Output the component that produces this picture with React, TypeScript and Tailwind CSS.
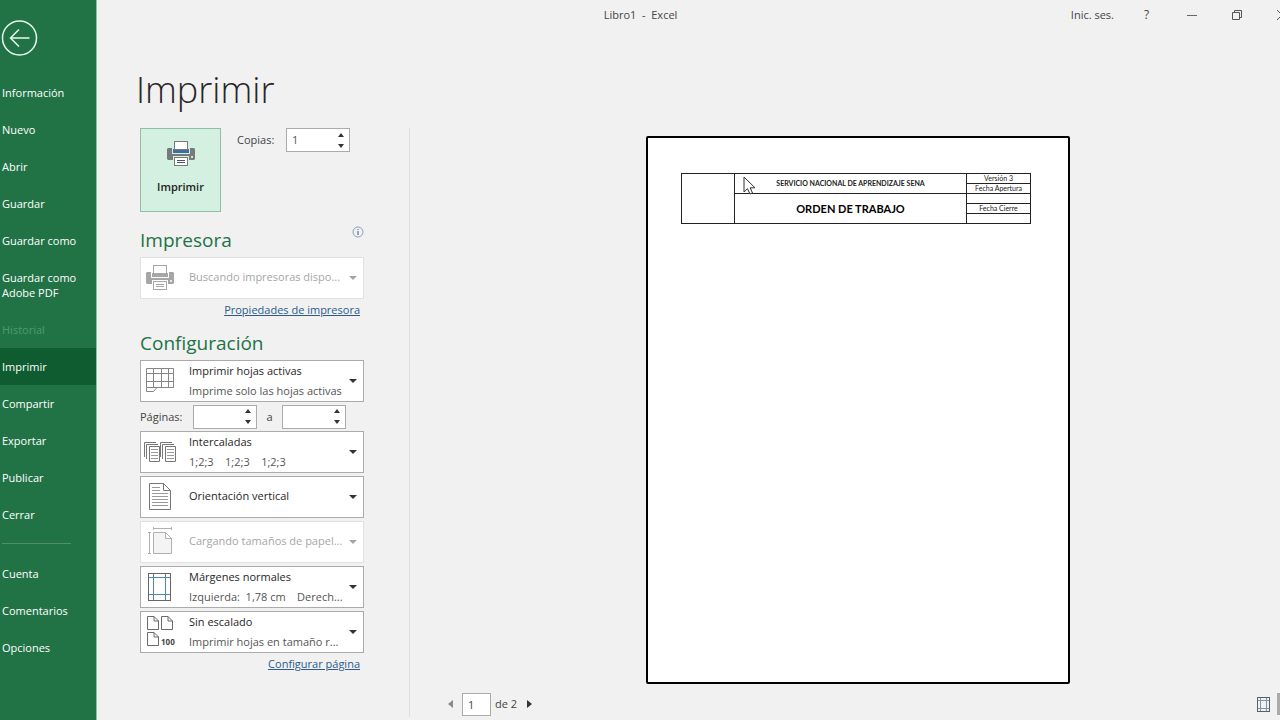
import { useState, type ReactNode } from 'react';

const navItems = [
  'Información',
  'Nuevo',
  'Abrir',
  'Guardar',
  'Guardar como',
  'Guardar como Adobe PDF',
  'Historial',
  'Imprimir',
  'Compartir',
  'Exportar',
  'Publicar',
  'Cerrar',
];

const footerItems = ['Cuenta', 'Comentarios', 'Opciones'];

function NavButton({ label, active, disabled }: { label: string; active?: boolean; disabled?: boolean }) {
  return (
    <button
      disabled={disabled}
      className={`block w-full py-[11px] pl-0.5 pr-4 text-left text-[11px] font-medium leading-[15px] ${
        active ? 'bg-[#0e5c2f]' : ''
      } ${disabled ? 'text-[#4f9870]' : 'text-white'}`}
    >
      {label}
    </button>
  );
}

function PrinterIcon({ disabled }: { disabled?: boolean }) {
  const body = disabled ? '#a6a6a6' : '#777a7c';
  const line = disabled ? '#a6a6a6' : '#44546a';
  const paper = disabled ? '#fff' : '#d3f0e0';
  return (
    <svg width="28" height="26" viewBox="0 0 28 26" fill="none">
      <path d="M1 7H27L28 8V18L27 19H1L0 18V8Z" fill={body} />
      <path d="M5 6H23V13H5Z" fill={paper} />
      <path d="M6 8H22V12H6Z" fill={disabled ? '#a6a6a6' : '#3d6da3'} />
      <rect x="7.500" y="0.500" width="13" height="8" fill="#fff" stroke={body} />
      <rect x="6" y="15" width="16" height="11" fill={paper} />
      <rect x="7.500" y="16.500" width="13" height="8" fill="#fff" stroke={body} />
      <path d="M10 19.500H18M10 21.500H18" stroke={line} />
      <circle cx="25" cy="16" r="1" fill="#fff" />
    </svg>
  );
}

function SheetsIcon() {
  return (
    <svg width="40" height="40" viewBox="0 0 40 40" fill="none" stroke="#858585">
      <path d="M5.500 7.500H32.500V26.500H5.500ZM12.500 7V26M20.500 7V26M27.500 7V26M5 12.500H32M5 20.500H32" />
      <path d="M5.500 26.500V30.500H12.500L16 26.500" />
    </svg>
  );
}

function CollatedIcon() {
  return (
    <svg width="40" height="40" viewBox="0 0 40 40" fill="none" stroke="#777">
      <path d="M3.500 25V10.500H15M5.500 27V12.500H17M19.500 25V10.500H31M21.500 27V12.500H33" />
      <path d="M8.500 14.500H18.500V29.500H8.500ZM24.500 14.500H34.500V29.500H24.500Z" fill="#fff" />
      <path
        d="M10 17.500H17M10 20.500H17M10 23.500H17M10 26.500H17M26 17.500H33M26 20.500H33M26 23.500H33M26 26.500H33"
        stroke="#9a9a9a"
      />
    </svg>
  );
}

function PortraitIcon() {
  return (
    <svg width="40" height="40" viewBox="0 0 40 40" fill="none" stroke="#777">
      <path d="M8.500 6.500H22.500L29.500 13.500V32.500H8.500ZM22.500 6.500V13.500H29.500" />
      <path
        d="M11 10.500H19M11 13.500H19M11 16.500H27M11 19.500H27M11 22.500H27M11 25.500H27M11 28.500H27"
        stroke="#9a9a9a"
      />
    </svg>
  );
}

function PaperSizeIcon() {
  return (
    <svg width="40" height="40" viewBox="0 0 40 40" fill="none" stroke="#b0b0b0">
      <path d="M12.500 10.500H24.500L30.500 16.500V31.500H12.500ZM24.500 10.500V16.500H30.500" fill="#f4f4f4" />
      <path d="M12 6.500H31M12.500 5V8M30.500 5V8M8.500 10V32M7 10.500H10M7 31.500H10" />
    </svg>
  );
}

function MarginsIcon({ small }: { small?: boolean }) {
  if (small) {
    return (
      <svg width="13" height="15" viewBox="0 0 13 15" fill="none">
        <path d="M3.500 1V14M9.500 1V14M1 3.500H12M1 11.500H12" stroke="#7d95a8" />
        <rect x="0.500" y="0.500" width="12" height="14" stroke="#56606a" />
      </svg>
    );
  }
  return (
    <svg width="40" height="40" viewBox="0 0 40 40" fill="none">
      <path d="M12.500 7V33M24.500 7V33M8 10.500H30M8 27.500H30" stroke="#4f86b5" />
      <rect x="7.500" y="6.500" width="22" height="27" stroke="#666" />
    </svg>
  );
}

function ScalingIcon() {
  return (
    <svg width="40" height="40" viewBox="0 0 40 40" fill="none" stroke="#6a6a6a">
      <path d="M6.500 4.500H13L17.500 9V17.500H6.500ZM13 4.500V9H17.500" />
      <path d="M20.500 4.500H27L31.500 9V17.500H20.500ZM27 4.500V9H31.500" />
      <path d="M6.500 20.500H13L17.500 25V33.500H6.500ZM13 20.500V25H17.500" />
      <text x="20" y="33" fontSize="8" fontWeight="700" fill="#444" stroke="none">
        100
      </text>
    </svg>
  );
}

type OptionBoxProps = {
  name: string;
  value: string;
  detail?: string;
  icon: ReactNode;
  disabled?: boolean;
};

function OptionBox({ name, value, detail, icon, disabled }: OptionBoxProps) {
  return (
    <div
      className={`relative flex h-[42px] items-center border bg-white ${
        disabled ? 'border-[#e1e1e1]' : 'border-[#ababab]'
      }`}
    >
      <div className="flex w-12 shrink-0 items-center">{icon}</div>
      <div className={`min-w-0 flex-1 ${detail ? '' : 'pb-0.5'}`}>
        <select
          aria-label={name}
          disabled={disabled}
          className={`block h-5 w-full appearance-none bg-transparent text-[11px] leading-5 opacity-100 ${
            disabled ? 'text-[#a6a6a6]' : 'text-[#262626]'
          }`}
        >
          <option>{value}</option>
        </select>
        {detail && <p className="whitespace-pre leading-5 text-[#555]">{detail}</p>}
      </div>
      <svg className="pointer-events-none absolute right-1.5 top-[17px]" width="8" height="6" viewBox="0 0 8 6">
        <path d="M0 1H8L4 5Z" fill={disabled ? '#a6a6a6' : '#333'} />
      </svg>
    </div>
  );
}

function NumberBox({ id, initial }: { id: string; initial: string }) {
  const [value, setValue] = useState(initial);
  const step = (n: number) => setValue(String(Math.max(1, Number(value) + n)));

  return (
    <div className="flex h-6 w-16 border border-[#ababab] bg-white">
      <input
        id={id}
        inputMode="numeric"
        value={value}
        onChange={(e) => setValue(e.target.value)}
        className="w-0 flex-1 pl-[5px] text-[11px] text-[#555] outline-none"
      />
      <div className="flex w-4 flex-col">
        <button aria-label="Aumentar" onClick={() => step(1)} className="flex flex-1 items-center justify-center">
          <svg width="6" height="4" viewBox="0 0 6 4">
            <path d="M0 4L3 0L6 4Z" fill="#333" />
          </svg>
        </button>
        <button aria-label="Disminuir" onClick={() => step(-1)} className="flex flex-1 items-center justify-center">
          <svg width="6" height="4" viewBox="0 0 6 4">
            <path d="M0 0L3 4L6 0Z" fill="#333" />
          </svg>
        </button>
      </div>
    </div>
  );
}

function TitleBar() {
  return (
    <header className="grid h-[30px] overflow-hidden text-[#444]">
      <h2 className="col-start-1 row-start-1 self-center whitespace-pre pr-24 text-center">Libro1  -  Excel</h2>
      <div className="col-start-1 row-start-1 -mr-6 flex items-center justify-self-end">
        <button className="mr-2.5">Inic. ses.</button>
        <button aria-label="Ayuda" className="w-[45px] text-[12px]">
          ?
        </button>
        <button aria-label="Minimizar" className="flex w-[45px] justify-center">
          <svg width="10" height="10" viewBox="0 0 10 10" stroke="#666">
            <path d="M0 5.500H10" />
          </svg>
        </button>
        <button aria-label="Restaurar" className="flex w-[45px] justify-center">
          <svg width="10" height="10" viewBox="0 0 10 10" fill="none" stroke="#555">
            <path d="M0.500 2.500H7.500V9.500H0.500ZM2.500 2.500V0.500H9.500V7.500H7.500" />
          </svg>
        </button>
        <button aria-label="Cerrar ventana" className="flex w-[45px] justify-center">
          <svg width="10" height="10" viewBox="0 0 10 10" stroke="#555">
            <path d="M0 0L10 10M10 0L0 10" />
          </svg>
        </button>
      </div>
    </header>
  );
}

function PrintSettings() {
  return (
    <div className="w-[224px] shrink-0 text-[#444]">
      <div className="flex gap-4">
        <button className="flex h-[84px] w-[81px] flex-col items-center border border-[#8fc0a6] bg-[#d3f0e0] pt-3">
          <PrinterIcon />
          <span className="mt-[11px] text-[11px] font-semibold text-[#222]">Imprimir</span>
        </button>
        <div className="flex h-6 items-center">
          <label htmlFor="copies" className="w-[49px]">
            Copias:
          </label>
          <NumberBox id="copies" initial="1" />
        </div>
      </div>

      <div className="mt-3.5 flex h-[31px] justify-between">
        <h2 className="text-[19px] leading-7 text-[#217346]">Impresora</h2>
        <button aria-label="Información de impresora" className="h-3">
          <svg width="12" height="12" viewBox="0 0 12 12" fill="none">
            <circle cx="6" cy="6" r="5" stroke="#8c9cc4" />
            <path d="M6 5V9M6 3V4" stroke="#44546a" />
          </svg>
        </button>
      </div>
      <OptionBox
        name="Impresora"
        value="Buscando impresoras dispo..."
        icon={
          <div className="pl-[5px]">
            <PrinterIcon disabled />
          </div>
        }
        disabled
      />
      <div className="pr-1 pt-0.5 text-right">
        <a href="#propiedades" className="text-[#2b5a8c] underline">
          Propiedades de impresora
        </a>
      </div>

      <h2 className="mb-[3px] mt-2.5 text-[19px] leading-7 text-[#217346]">Configuración</h2>
      <div className="flex flex-col gap-[3px]">
        <OptionBox
          name="Qué imprimir"
          value="Imprimir hojas activas"
          detail="Imprime solo las hojas activas"
          icon={<SheetsIcon />}
        />
        <div className="flex h-[23px] items-center">
          <label htmlFor="from" className="w-[53px]">
            Páginas:
          </label>
          <NumberBox id="from" initial="" />
          <label htmlFor="to" className="w-[25px] text-center">
            a
          </label>
          <NumberBox id="to" initial="" />
        </div>
        <OptionBox name="Intercalado" value="Intercaladas" detail="1;2;3    1;2;3    1;2;3" icon={<CollatedIcon />} />
        <OptionBox name="Orientación" value="Orientación vertical" icon={<PortraitIcon />} />
        <OptionBox name="Tamaño de papel" value="Cargando tamaños de papel..." icon={<PaperSizeIcon />} disabled />
        <OptionBox
          name="Márgenes"
          value="Márgenes normales"
          detail="Izquierda:  1,78 cm    Derech..."
          icon={<MarginsIcon />}
        />
        <OptionBox
          name="Escala"
          value="Sin escalado"
          detail="Imprimir hojas en tamaño r..."
          icon={<ScalingIcon />}
        />
      </div>
      <div className="pr-1 pt-0.5 text-right">
        <a href="#pagina" className="text-[#2b5a8c] underline">
          Configurar página
        </a>
      </div>
    </div>
  );
}

function Preview() {
  return (
    <section className="flex flex-1 flex-col pl-[26px]">
      <div className="relative mx-auto mt-2 aspect-[424/548] w-[424px] rounded-[2px] border-2 border-black bg-white pl-[33px] pr-[37px] pt-[35px]">
        <table className="w-full table-fixed border-collapse border border-[#222] text-center font-['Lato',sans-serif] text-[7px] leading-[9px] text-[#222]">
          <colgroup>
            <col className="w-[53px]" />
            <col />
            <col className="w-16" />
          </colgroup>
          <tbody>
            <tr className="h-2.5">
              <td rowSpan={5} className="border border-[#222] p-0" />
              <td rowSpan={2} className="border border-[#222] p-0 font-bold">
                SERVICIO NACIONAL DE APRENDIZAJE SENA
              </td>
              <td className="border border-[#222] p-0">Versión 3</td>
            </tr>
            <tr className="h-2.5">
              <td className="border border-[#222] p-0">Fecha Apertura</td>
            </tr>
            <tr className="h-2.5">
              <td rowSpan={3} className="border border-[#222] p-0 text-[11px] font-bold text-black">
                ORDEN DE TRABAJO
              </td>
              <td className="border border-[#222] p-0" />
            </tr>
            <tr className="h-2.5">
              <td className="border border-[#222] p-0">Fecha Cierre</td>
            </tr>
            <tr className="h-2.5">
              <td className="border border-[#222] p-0" />
            </tr>
          </tbody>
        </table>
        <svg className="absolute left-[95px] top-[38px]" width="13" height="19" viewBox="0 0 13 19">
          <path d="M1 1V16L4.500 12.700L7 18L9.500 17L7.200 11.800H12Z" fill="#fff" stroke="#333" />
        </svg>
      </div>

      <div className="mt-2 flex h-6 items-center pl-3 text-[#444]">
        <button aria-label="Página anterior" className="mr-2">
          <svg width="6" height="8" viewBox="0 0 6 8">
            <path d="M5 0V8L0 4Z" fill="#8a8a8a" />
          </svg>
        </button>
        <input
          aria-label="Página actual"
          defaultValue="1"
          className="h-[23px] w-[29px] border border-[#ababab] bg-white pl-[5px] text-[11px] text-[#444] outline-none"
        />
        <span className="ml-1">de 2</span>
        <button aria-label="Página siguiente" className="ml-2.5">
          <svg width="6" height="8" viewBox="0 0 6 8">
            <path d="M0 0V8L5 4Z" fill="#333" />
          </svg>
        </button>
        <button aria-label="Mostrar márgenes" className="ml-auto mr-[7px]">
          <MarginsIcon small />
        </button>
        <div className="h-[22px] w-[3px] bg-[#ababab]" />
      </div>
    </section>
  );
}

export default function App() {
  return (
    <div className="flex min-h-screen bg-[#f1f1f1] font-['Open_Sans','Noto_Sans',sans-serif] text-[11px] leading-[18px]">
      <aside className="w-[97px] shrink-0 border-r border-[#8fbfa3] bg-[#217346] pt-5">
        <button aria-label="Volver" className="ml-px block">
          <svg width="37" height="36" viewBox="0 0 37 36" fill="none" stroke="#e6f7ec">
            <circle cx="18.500" cy="18" r="17" strokeWidth="1.500" />
            <path d="M28.500 18H9.500M18 9.500L9.500 18L18 26.500" strokeWidth="1.500" />
          </svg>
        </button>
        <nav className="mt-[18px]">
          {navItems.map((item) => (
            <NavButton key={item} label={item} active={item === 'Imprimir'} disabled={item === 'Historial'} />
          ))}
          <hr className="mb-[11px] ml-0.5 mr-[25px] mt-2.5 border-[#4d9069]" />
          {footerItems.map((item) => (
            <NavButton key={item} label={item} />
          ))}
        </nav>
      </aside>

      <main className="flex min-w-0 flex-1 flex-col">
        <TitleBar />
        <h1 className="ml-[39px] mt-[34px] h-16 text-[36px] font-light leading-[52px] text-[#262626]">Imprimir</h1>
        <div className="flex flex-1 pl-[43px]">
          <PrintSettings />
          <div className="mb-[3px] ml-[45px] w-px bg-[#dedede]" />
          <Preview />
        </div>
      </main>
    </div>
  );
}
